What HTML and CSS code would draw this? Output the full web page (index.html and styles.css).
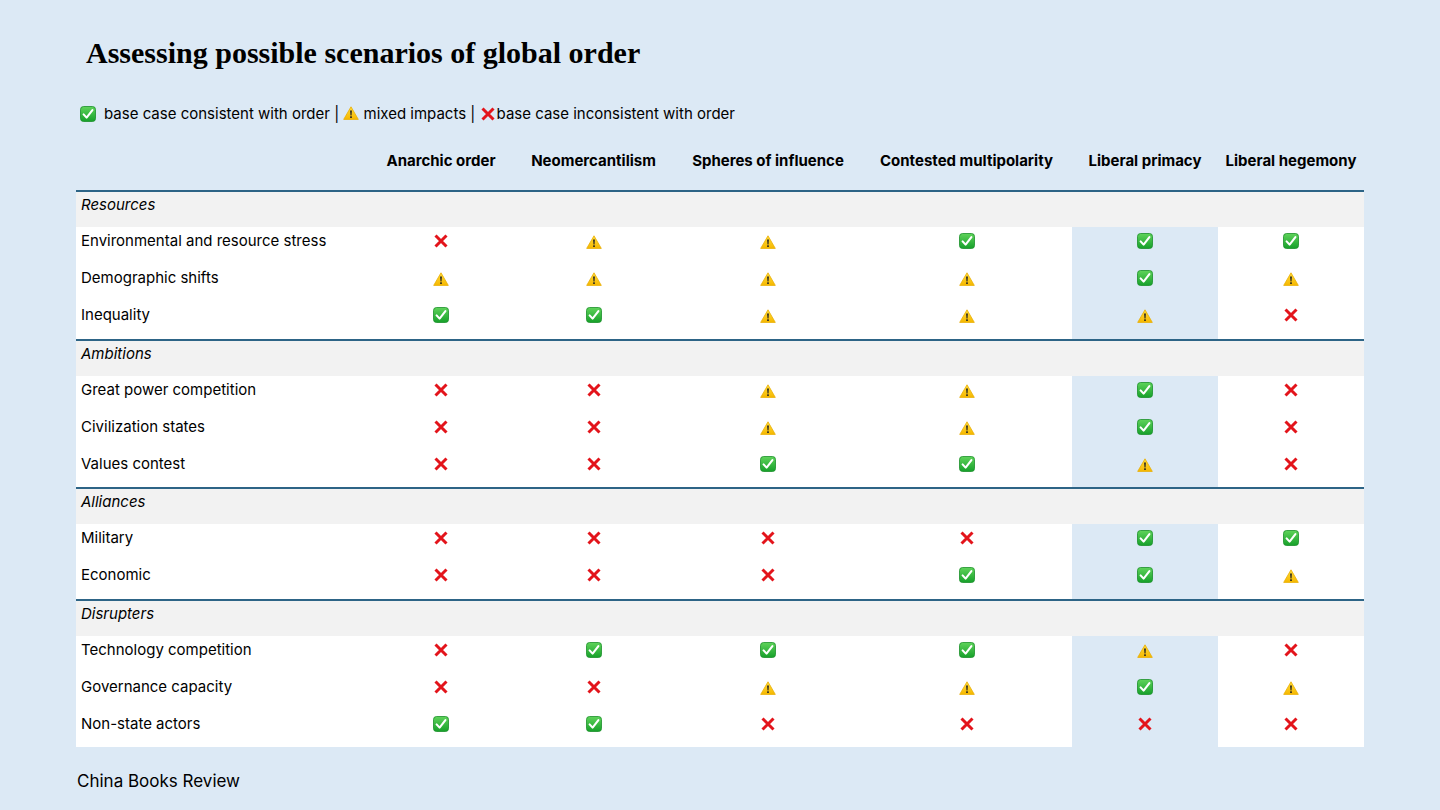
FILE: index.html
```html
<!DOCTYPE html>
<html lang="en">
<head>
<meta charset="utf-8">
<title>Assessing possible scenarios of global order</title>
<link rel="stylesheet" href="styles.css">
</head>
<body>
<svg width="0" height="0" class="defs" aria-hidden="true">
  <defs>
    <linearGradient id="gChk" x1="0" y1="0" x2="0" y2="1">
      <stop offset="0" stop-color="#5fd35a"/>
      <stop offset="1" stop-color="#16a02a"/>
    </linearGradient>
    <linearGradient id="gWarn" x1="0" y1="0" x2="0" y2="1">
      <stop offset="0" stop-color="#ffdc3a"/>
      <stop offset="1" stop-color="#f6b800"/>
    </linearGradient>
    <symbol id="chk" viewBox="0 0 16 16">
      <rect x="0.5" y="0.5" width="15" height="15" rx="3" fill="url(#gChk)" stroke="#1a8f2a" stroke-width="0.8"/>
      <path d="M3.6 8.4 L6.6 11.6 L12.4 4.2" fill="none" stroke="#fff" stroke-width="2.1" stroke-linecap="round" stroke-linejoin="round"/>
    </symbol>
    <symbol id="warn" viewBox="0 0 16 14">
      <path d="M8 0.8 L15.3 13.4 L0.7 13.4 Z" fill="url(#gWarn)" stroke="#e9ad00" stroke-width="0.8" stroke-linejoin="round"/>
      <path d="M7.1 4.4 L8.9 4.4 L8.5 9.4 L7.5 9.4 Z" fill="#222"/>
      <rect x="7.1" y="10.3" width="1.8" height="1.7" rx="0.4" fill="#222"/>
    </symbol>
    <symbol id="crs" viewBox="0 0 16 16">
      <path d="M2.5 2.5 L13.5 13.5 M13.5 2.5 L2.5 13.5" stroke="#e3141b" stroke-width="3" stroke-linecap="butt"/>
    </symbol>
  </defs>
</svg>

<main class="page">
  <h1 class="title">Assessing possible scenarios of global order</h1>

  <p class="legend"><svg class="ico ico-chk"><use href="#chk"/></svg><span class="gap"></span>base case consistent with order | <svg class="ico ico-warn"><use href="#warn"/></svg> mixed impacts | <svg class="ico ico-crs"><use href="#crs"/></svg>base case inconsistent with order</p>

  <div class="matrix" id="matrix">
    <div class="row head">
      <div class="cell"></div>
      <div class="cell">Anarchic order</div>
      <div class="cell">Neomercantilism</div>
      <div class="cell">Spheres of influence</div>
      <div class="cell">Contested multipolarity</div>
      <div class="cell">Liberal primacy</div>
      <div class="cell">Liberal hegemony</div>
    </div>
  </div>

  <footer class="footer">China Books Review</footer>
</main>

<script>
  var data = [
    ["Resources", [
      ["Environmental and resource stress", "xwwccc"],
      ["Demographic shifts", "wwwwcw"],
      ["Inequality", "ccwwwx"]
    ]],
    ["Ambitions", [
      ["Great power competition", "xxwwcx"],
      ["Civilization states", "xxwwcx"],
      ["Values contest", "xxccwx"]
    ]],
    ["Alliances", [
      ["Military", "xxxxcc"],
      ["Economic", "xxxccw"]
    ]],
    ["Disrupters", [
      ["Technology competition", "xcccwx"],
      ["Governance capacity", "xxwwcw"],
      ["Non-state actors", "ccxxxx"]
    ]]
  ];
  var icon = {
    c: '<svg class="ico ico-chk"><use href="#chk"/></svg>',
    w: '<svg class="ico ico-warn"><use href="#warn"/></svg>',
    x: '<svg class="ico ico-crs"><use href="#crs"/></svg>'
  };
  var html = "";
  data.forEach(function (g) {
    html += '<div class="row group"><div class="cell label">' + g[0] + '</div></div>';
    g[1].forEach(function (r) {
      html += '<div class="row data"><div class="cell label">' + r[0] + '</div>';
      for (var i = 0; i < r[1].length; i++) {
        html += '<div class="cell mark' + (i === 4 ? ' hl' : '') + '">' + icon[r[1][i]] + '</div>';
      }
      html += '</div>';
    });
  });
  document.getElementById("matrix").insertAdjacentHTML("beforeend", html);
</script>
</body>
</html>
```

FILE: styles.css
```css
html, body {
  margin: 0;
  padding: 0;
}

body {
  background: #dce9f5;
  color: #000;
  font-family: "Inter", "Liberation Sans", sans-serif;
  width: 1440px;
  height: 810px;
  overflow: hidden;
}

.defs {
  position: absolute;
  width: 0;
  height: 0;
}

.page {
  padding: 36px 76px 0 76px;
}

.title {
  margin: 0 0 32px 10px;
  font-family: "Liberation Serif", "DejaVu Serif", serif;
  font-weight: 700;
  font-size: 30px;
  line-height: 34px;
  letter-spacing: 0;
}

.legend {
  margin: 0 0 14px 4px;
  font-size: 15px;
  line-height: 24px;
  white-space: nowrap;
}

.legend .ico {
  vertical-align: -3px;
}

.legend .ico-warn {
  vertical-align: -1px;
}

.gap {
  display: inline-block;
  width: 8px;
}

.legend .ico-crs {
  margin-right: 1px;
}

.matrix {
  width: 1288px;
}

.row {
  display: grid;
  grid-template-columns: 294px 142px 163px 186px 211px 146px 146px;
}

.cell {
  font-size: 15px;
  line-height: 24px;
}

.head {
  height: 50px;
}

.head .cell {
  padding-top: 9px;
  font-weight: 700;
  text-align: center;
  white-space: nowrap;
}

.group {
  display: block;
  height: 37.15px;
  box-sizing: border-box;
  border-top: 2px solid #2d6486;
  background: #f2f2f2;
}

.group .cell {
  font-style: italic;
  padding: 1px 0 0 5px;
}

.data {
  height: 37.15px;
  background: #fff;
}

.data .cell {
  padding-top: 2px;
}

.data .label {
  padding-left: 5px;
}

.mark {
  display: flex;
  justify-content: center;
  align-items: flex-start;
}

.mark .ico {
  margin-top: 4px;
}

.hl {
  background: #dce9f5;
}

.ico {
  display: inline-block;
  flex: none;
}

.ico-chk {
  width: 16px;
  height: 16px;
}

.ico-warn {
  width: 16px;
  height: 14px;
}

.mark .ico-warn {
  margin-top: 6px;
}

.ico-crs {
  width: 16px;
  height: 16px;
}

.footer {
  margin: 22px 0 0 1px;
  font-size: 17px;
  line-height: 24px;
}
```
